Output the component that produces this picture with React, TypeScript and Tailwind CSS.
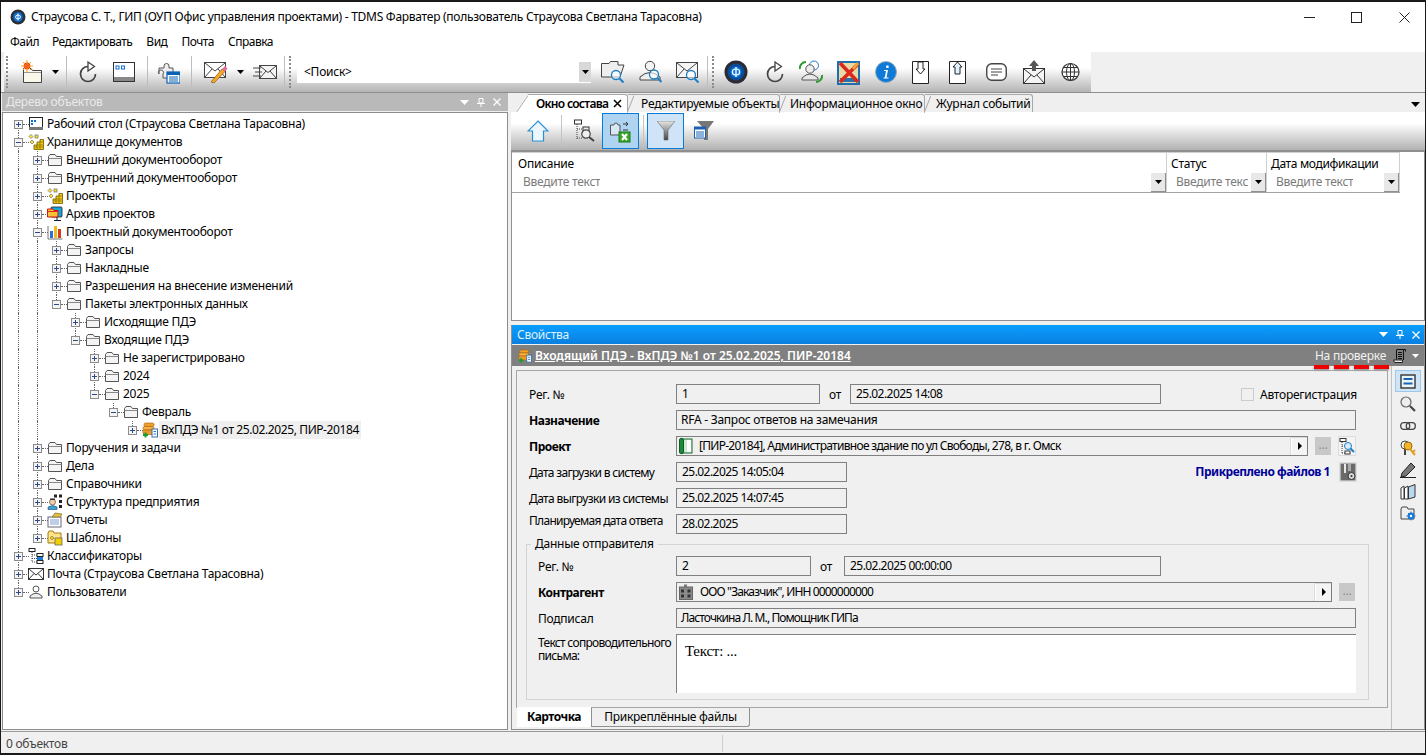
import React from "react";

const S = ({ w, h, vb, children, className }: { w: number; h: number; vb?: string; children: React.ReactNode; className?: string }) => (
  <svg width={w} height={h} viewBox={vb ?? `0 0 ${w} ${h}`} className={"shrink-0 " + (className ?? "")}>{children}</svg>
);

/* ---------- tree icons ---------- */
const Folder = () => (
  <S w={16} h={14}>
    <path d="M1.5 3.5 L3 1.5 H8 L9.5 3.5 H14.5 V12.5 H1.5 Z" fill="#f4f4f4" stroke="#555" />
    <path d="M1.5 5.5 H14.5" stroke="#888" />
  </S>
);
const Desk = () => (
  <S w={16} h={14}>
    <rect x="1.5" y="0.5" width="13" height="11" fill="#fff" stroke="#222" />
    <rect x="1" y="10" width="14" height="3" fill="#777" />
    <rect x="3" y="3" width="2" height="2" fill="#0a6fd6" />
    <rect x="6" y="3" width="2" height="2" fill="#0a6fd6" />
    <rect x="3" y="6" width="2" height="2" fill="#0a6fd6" />
  </S>
);
const Store = () => (
  <S w={16} h={16}>
    <path d="M3 0.5 L5 2.5 L3 4.5 L1 2.5 Z M4 6 L6 8 L4 10 L2 8 Z" fill="#ffe23a" stroke="#555" strokeWidth=".6" />
    <rect x="7" y="1" width="3" height="3" fill="#ffe23a" stroke="#555" strokeWidth=".6" />
    <path d="M6 15.5 V11 H9 V8 H12 V5.5 H15.5 V15.5 Z" fill="#f6c90e" stroke="#6a5a00" strokeWidth=".8" />
    <path d="M9 11 V15 M12 8 V15 M6 13 H15 M9 11 H15 M12 8 H15" stroke="#6a5a00" strokeWidth=".6" />
  </S>
);
const Archive = () => (
  <S w={16} h={16}>
    <rect x="4" y="1" width="11" height="10" rx="1" fill="#1aa4d8" stroke="#123" strokeWidth=".8" />
    <path d="M0.5 3 H6 L7 4.5 H11 V11 H0.5 Z" fill="#f6c237" stroke="#d01010" />
    <path d="M0.5 5.5 H11" stroke="#e02020" />
    <path d="M7 14.5 H14 M10 11 V14" stroke="#123" />
  </S>
);
const Chart = () => (
  <S w={16} h={16}>
    <path d="M1 15 H15.5 M1 15 V2" stroke="#777" fill="none" />
    <rect x="3" y="7" width="3" height="7" fill="#2f6fd0" />
    <rect x="7" y="2" width="3" height="12" fill="#f2b820" />
    <rect x="11" y="5" width="3" height="9" fill="#d43c1c" />
  </S>
);
const Pkg = ({ s = 16 }: { s?: number }) => (
  <S w={s} h={s} vb="0 0 16 16">
    <rect x="2" y="1" width="10" height="3.5" rx="1.5" fill="#f0a028" stroke="#a45c10" strokeWidth=".6" />
    <rect x="1" y="4.5" width="11" height="3.5" rx="1.5" fill="#f6b23c" stroke="#a45c10" strokeWidth=".6" />
    <rect x="1" y="8" width="11" height="4.5" rx="1.5" fill="#ee9a26" stroke="#a45c10" strokeWidth=".6" />
    <rect x="10" y="7" width="5.5" height="8" fill="#fff" stroke="#3b6ea8" />
    <path d="M11.5 9.5 H14 M11.5 12 H14" stroke="#2a7ad0" />
    <path d="M1 13 H6 M3.5 10.5 V15.5" stroke="#1a9a30" strokeWidth="2" />
  </S>
);
const Org = () => (
  <S w={16} h={16}>
    <circle cx="5.5" cy="8" r="3" fill="#f6cfa0" stroke="#555" strokeWidth=".7" />
    <path d="M1 15.5 V13 Q5.5 10 10 13 V15.5 Z" fill="#3aa3d8" stroke="#246" strokeWidth=".6" />
    <path d="M3 6 H8 V4.5 H3 Z" fill="#333" />
    <rect x="7" y="0.5" width="3" height="3" fill="#222" />
    <rect x="12" y="0.5" width="3" height="3" fill="#222" />
    <rect x="12" y="6" width="3" height="3" fill="#222" />
    <rect x="12" y="11" width="3" height="3" fill="#222" />
  </S>
);
const Report = () => (
  <S w={16} h={16}>
    <rect x="1" y="5" width="13" height="10" fill="#fff" stroke="#667" />
    <path d="M3 8 H12 M3 10 H12 M3 12 H12" stroke="#7aa0d0" />
    <path d="M5 5 L8 1 L15 2 L13 5 Z" fill="#e2c048" stroke="#7a6a20" strokeWidth=".7" />
  </S>
);
const Tmpl = () => (
  <S w={16} h={16}>
    <path d="M1 3 L2 1 H6 L7 3 H14 V13 H1 Z" fill="#ffe38a" stroke="#a57b10" />
    <rect x="8" y="8" width="7" height="7" fill="#f2d000" stroke="#666" strokeWidth=".8" />
    <path d="M5 6 L7 8 L5 10 L3 8 Z" fill="#f2d000" stroke="#666" strokeWidth=".6" />
  </S>
);
const Classif = () => (
  <S w={16} h={16}>
    <rect x="1" y="0.5" width="6" height="3" fill="#fff" stroke="#222" />
    <path d="M4 4 V14 M4 7 H9 M4 10.5 H9 M4 14 H9" stroke="#444" strokeDasharray="1 1" />
    <rect x="9" y="5.5" width="6" height="3" fill="#fff" stroke="#222" />
    <rect x="9" y="9" width="6" height="3" fill="#1a7ad6" />
    <rect x="9" y="12.5" width="6" height="3" fill="#fff" stroke="#222" />
  </S>
);
const MailI = () => (
  <S w={16} h={14}>
    <rect x="0.5" y="1.5" width="15" height="11" fill="#fff" stroke="#333" />
    <path d="M1 2 L8 8 L15 2 M1 12 L6 6.5 M15 12 L10 6.5" stroke="#333" fill="none" />
  </S>
);
const User = () => (
  <S w={16} h={14}>
    <circle cx="8" cy="4" r="3" fill="#fff" stroke="#555" />
    <path d="M2 13 V11 Q8 5.5 14 11 V13 Z" fill="#eee" stroke="#555" />
  </S>
);

/* ---------- toolbar icons ---------- */
const Caret = ({ c = "#000" }: { c?: string }) => (
  <S w={7} h={4}><path d="M0 0 H7 L3.5 4 Z" fill={c} /></S>
);
const Handle = () => <div className="h-[32px] w-[2px] shrink-0 border-l-2 border-dotted border-[#8a8a8a]" />;
const Sep = ({ className }: { className: string }) => <div className={"h-[32px] w-px shrink-0 bg-[#bdbdbd] " + className} />;
const NewFolder = () => (
  <S w={22} h={24}>
    <path d="M2.5 8.5 H10 L11.5 10.5 H20.5 V22.5 H2.5 Z" fill="#fbf6ea" stroke="#444" />
    <path d="M3 12.5 H20" stroke="#999" />
    <circle cx="6" cy="6" r="3.4" fill="#ee3a10" />
    <path d="M6 0 V12 M0 6 H12 M2 2 L10 10 M10 2 L2 10" stroke="#f5a623" strokeWidth="1" />
    <circle cx="6" cy="6" r="2" fill="#f25a20" />
  </S>
);
const Refresh = ({ s = 18 }: { s?: number }) => (
  <S w={s} h={s + 4} vb="0 0 18 22">
    <path d="M9 5.5 A7.5 7.5 0 1 0 16.5 13" fill="none" stroke="#444" strokeWidth="1.7" />
    <path d="M9 1 L15.5 5.5 L9 10 Z" fill="#fff" stroke="#444" strokeWidth="1.3" />
  </S>
);
const WinI = () => (
  <S w={22} h={20}>
    <rect x="0.5" y="0.5" width="21" height="19" fill="#fff" stroke="#333" />
    <rect x="1" y="15" width="20" height="4" fill="#888" />
    <rect x="3" y="4" width="3" height="3" fill="none" stroke="#0a6fd6" />
    <rect x="8.5" y="4" width="3" height="3" fill="none" stroke="#0a6fd6" />
  </S>
);
const Puzzle = () => (
  <S w={22} h={24}>
    <path d="M1 8 H6 V6 A2.5 2.5 0 1 1 11 6 V8 H15 V18 H5 V14 A2.5 2.5 0 1 0 1 14 Z" fill="#eee" stroke="#555" />
    <rect x="9" y="12" width="13" height="11" fill="#fff" stroke="#0a62b5" strokeWidth="1.2" />
    <rect x="9" y="12" width="13" height="3" fill="#0a62b5" />
    <path d="M11 17 H20 M11 19 H20 M11 21 H20" stroke="#0a62b5" />
  </S>
);
const MailPen = () => (
  <S w={24} h={24}>
    <rect x="0.5" y="2.5" width="21" height="15" fill="#fff" stroke="#444" />
    <path d="M1 3 L11 11 L21 3 M1 17 L8 9 M21 17 L14 9" stroke="#444" fill="none" />
    <path d="M7 22 L18 9 L21 11.5 L10 23 Z" fill="#f6a92c" stroke="#84560c" strokeWidth=".7" />
    <path d="M18 9 L21 6 L23.5 8.5 L21 11.5 Z" fill="#e46a9a" />
  </S>
);
const MailSend = () => (
  <S w={24} h={18}>
    <rect x="6.5" y="2.5" width="17" height="13" fill="#f4f4f4" stroke="#444" />
    <path d="M7 3 L15 9.5 L23 3 M7 15 L13 8 M23 15 L17 8" stroke="#444" fill="none" />
    <path d="M0 5 H8 M2 9 H9 M0 13 H8" stroke="#444" />
  </S>
);
const Loupe = ({ x = 10, y = 12, r = 5 }: { x?: number; y?: number; r?: number }) => (
  <g>
    <circle cx={x} cy={y} r={r} fill="#ffffff" fillOpacity=".6" stroke="#1c7ec4" strokeWidth="1.3" />
    <path d={`M${x + r - 1} ${y + r - 1} L${x + r + 3} ${y + r + 3}`} stroke="#1c7ec4" strokeWidth="2" />
  </g>
);
const FolderSearch = () => (
  <S w={24} h={24}>
    <path d="M0.5 3.5 H8 L9.5 1.5 H17 V5 H23 L19 17 H0.5 Z" fill="#eee" stroke="#444" />
    <Loupe x={15} y={15} r={4.5} />
  </S>
);
const UserSearch = () => (
  <S w={24} h={24}>
    <circle cx="11" cy="6" r="4.7" fill="#f4f4f4" stroke="#444" />
    <path d="M1 20 V17 Q11 8 21 17 V20 Z" fill="#eee" stroke="#444" />
    <Loupe x={15} y={14.5} r={4.5} />
  </S>
);
const MailSearch = () => (
  <S w={24} h={24}>
    <rect x="0.5" y="2.5" width="21" height="15" fill="#f6f6f6" stroke="#444" />
    <path d="M1 3 L11 11 L21 3 M1 17 L8 9" stroke="#444" fill="none" />
    <Loupe x={15} y={15} r={4.5} />
  </S>
);
const FiLogo = () => (
  <S w={24} h={24}>
    <circle cx="12" cy="12" r="11.5" fill="#2c2c30" />
    <circle cx="12" cy="12" r="8.5" fill="#0a4c9c" />
    <circle cx="12" cy="12" r="5.5" fill="#0e7ce0" />
    <ellipse cx="12" cy="12" rx="3.6" ry="3" fill="none" stroke="#fff" strokeWidth="1.2" />
    <path d="M12 7 V17" stroke="#fff" strokeWidth="1.3" />
  </S>
);
const UsersSync = () => (
  <S w={24} h={24}>
    <circle cx="15" cy="5.5" r="4.5" fill="#fff" stroke="#2b78c4" />
    <circle cx="11" cy="9" r="4.2" fill="#eee" stroke="#555" />
    <path d="M3 20 V18 Q11 10 19 18 V20 Z" fill="#e8e8e8" stroke="#555" />
    <path d="M1 9 A6 6 0 0 1 7 2" stroke="#2d9a2d" strokeWidth="2" fill="none" />
    <path d="M23 15 A6 6 0 0 1 17 22" stroke="#2d9a2d" strokeWidth="2" fill="none" />
  </S>
);
const RedX = () => (
  <S w={23} h={25}>
    <rect x="1" y="2" width="21" height="22" fill="#e9d8a8" stroke="#1e6fb0" strokeWidth="2" />
    <path d="M3 22 H20 V18 H3 Z" fill="#2a6faf" />
    <path d="M3 3 L21 22 M21 4 L3 22" stroke="#dc2a1a" strokeWidth="3.6" />
    <path d="M15 8 L20 2 L22 4 L17 10 Z" fill="#f2a33a" />
  </S>
);
const Info = () => (
  <S w={22} h={22}>
    <circle cx="11" cy="11" r="10.5" fill="#0c7ad6" stroke="#9ab" />
    <path d="M9 9 H13 L11.5 16.5 H13.5 V17.5 H8.5 V16.5 H9.8 L11 10 H9 Z M11.2 4.5 H13.6 V7 H11.2 Z" fill="#fff" />
  </S>
);
const DocArrow = ({ up }: { up?: boolean }) => (
  <S w={17} h={23}>
    <path d="M0.5 0.5 H16.5 V22.5 H0.5 Z" fill="#fff" stroke="#222" />
    {up ? <path d="M8.5 1 L13 6 H11 V13 H6 V6 H4 Z" fill="#dff0ff" stroke="#222" /> : <path d="M6 1 H11 V8 H13 L8.5 13 L4 8 H6 Z" fill="#fff" stroke="#222" />}
  </S>
);
const Chat = () => (
  <S w={21} h={20}>
    <rect x="0.75" y="1.75" width="19.5" height="16.5" rx="5" fill="#fff" stroke="#444" strokeWidth="1.4" />
    <path d="M5 7 H16 M5 10 H16 M5 13 H12" stroke="#444" />
  </S>
);
const MailUp = () => (
  <S w={22} h={24}>
    <rect x="0.5" y="8.5" width="21" height="15" fill="#f5f5f5" stroke="#333" />
    <path d="M1 9 L11 17 L21 9 M1 23 L8 15 M21 23 L14 15" stroke="#333" fill="none" />
    <path d="M11 0 L16 6 H13 V11 H9 V6 H6 Z" fill="#555" />
  </S>
);
const Globe = () => (
  <S w={19} h={20}>
    <circle cx="9.5" cy="10" r="8.5" fill="#fff" stroke="#333" strokeWidth="1.2" />
    <ellipse cx="9.5" cy="10" rx="4" ry="8.5" fill="none" stroke="#333" />
    <path d="M9.5 1.5 V18.5 M1 10 H18 M2.5 5.5 H16.5 M2.5 14.5 H16.5" stroke="#333" />
  </S>
);

/* ---------- panel toolbar icons ---------- */
const Home = () => (
  <S w={22} h={22}>
    <path d="M11 1 L21 11 H16.5 V21 H5.5 V11 H1 Z" fill="#ecf6ff" stroke="#2a8fd0" strokeWidth="1.2" />
  </S>
);
const TreeSearch = () => (
  <S w={21} h={24}>
    <rect x="0.5" y="1" width="7" height="4" fill="#fff" stroke="#333" />
    <path d="M3 5 V20 M3 10 H9 M3 19 H9" stroke="#444" strokeDasharray="1 1" />
    <rect x="9" y="8" width="6" height="4" fill="#eee" stroke="#333" />
    <circle cx="12" cy="15" r="4.2" fill="#eee" stroke="#444" strokeWidth="1.2" />
    <path d="M15 18 L20 22" stroke="#444" strokeWidth="2" />
  </S>
);
const PuzzleXls = () => (
  <S w={21} h={24}>
    <path d="M0.5 6 H4 A2 2 0 1 1 8 6 H10 V16 H0.5 Z" fill="#d8e8f4" stroke="#555" />
    <path d="M13 5 H18 M16 3 L18 5 L16 7 M13 11 H18" stroke="#333" fill="none" />
    <rect x="9" y="13" width="11" height="10" fill="#3ba82c" stroke="#1d7a10" />
    <path d="M12 15 L17 21 M17 15 L12 21" stroke="#fff" strokeWidth="2" />
  </S>
);
const Funnel = () => (
  <S w={18} h={20}>
    <defs>
      <linearGradient id="fg" x1="0" x2="0" y1="0" y2="1"><stop offset="0" stopColor="#e8e8e8" /><stop offset="1" stopColor="#444" /></linearGradient>
    </defs>
    <path d="M0 0 H18 L11 9 V19 H7 V9 Z" fill="url(#fg)" stroke="#666" strokeWidth=".6" />
  </S>
);
const FunnelList = () => (
  <S w={20} h={20}>
    <path d="M3 0 H20 L14 8 V19 H10 V8 Z" fill="#777" />
    <rect x="0.5" y="6" width="11" height="11" fill="#fff" stroke="#1a62b0" />
    <rect x="0.5" y="6" width="11" height="2.5" fill="#1a62b0" />
    <path d="M2 11 H10 M2 13 H10 M2 15 H10" stroke="#1a62b0" />
  </S>
);

/* ---------- side icons ---------- */
const CardI = () => (
  <S w={16} h={15}>
    <rect x="1" y="1" width="14" height="13" fill="#eaf4fb" stroke="#333" strokeWidth="1.4" />
    <path d="M3.5 5 H12.5 M3.5 9.5 H12.5" stroke="#1a62b0" strokeWidth="2" />
  </S>
);
const GLoupe = () => (
  <S w={16} h={16}>
    <circle cx="6" cy="6" r="5" fill="#eee" stroke="#666" strokeWidth="1.2" />
    <path d="M10 10 L15 15" stroke="#444" strokeWidth="2.2" />
  </S>
);
const Chain = () => (
  <S w={16} h={10}>
    <rect x="0.7" y="1.7" width="9" height="6.6" rx="3" fill="none" stroke="#444" strokeWidth="1.3" />
    <rect x="6.3" y="1.7" width="9" height="6.6" rx="3" fill="none" stroke="#444" strokeWidth="1.3" />
  </S>
);
const Keys = () => (
  <S w={16} h={16}>
    <circle cx="5" cy="5" r="4" fill="#fff" stroke="#444" />
    <path d="M5 9 V15" stroke="#444" strokeWidth="2" />
    <circle cx="8" cy="6" r="4" fill="#f2b526" stroke="#9a6a10" />
    <path d="M10 9 L15 15 M13 12 L15 10" stroke="#e2a11c" strokeWidth="2" />
  </S>
);
const Pen = () => (
  <S w={16} h={16}>
    <path d="M2 11 L11 1 L15 5 L6 14 L1 15 Z" fill="#777" stroke="#222" />
    <path d="M0 15.5 H16" stroke="#222" />
  </S>
);
const Books = () => (
  <S w={16} h={16}>
    <path d="M1 4 L4 2 V15 H1 Z M4.5 4 L8 2 V15 H4.5 Z" fill="#fff" stroke="#333" />
    <path d="M8.5 3 L15 0.5 V13 L8.5 15 Z" fill="#b9d9f2" stroke="#333" />
  </S>
);
const FolderGear = () => (
  <S w={16} h={16}>
    <path d="M1 3 L2 1 H7 L8 3 H14 V13 H1 Z" fill="#eee" stroke="#444" />
    <circle cx="11" cy="10" r="3.4" fill="#1a7ad6" />
    <path d="M11 5.5 V14.5 M6.5 10 H15.5 M8 7 L14 13 M14 7 L8 13" stroke="#1a7ad6" />
    <circle cx="11" cy="10" r="1.2" fill="#fff" />
  </S>
);
const Scroll = () => (
  <S w={13} h={14}>
    <path d="M3.5 0.5 H12.5 M12.5 0.5 V2.5 M10.5 1 V11 M3.5 1 V10.5" stroke="#111" fill="none" />
    <path d="M5 3.5 H9 M5 5.5 H9 M5 7.5 H9 M5 9.5 H9" stroke="#111" />
    <path d="M0.5 11 H9.5 V13.5 H1.5 Z" fill="#e8e8e8" stroke="#222" />
  </S>
);
const ProjBook = () => (
  <S w={14} h={16}>
    <rect x="2" y="1" width="11" height="14" fill="#cfe8d4" stroke="#166a2c" />
    <rect x="0.5" y="0.5" width="4" height="15" rx="1.5" fill="#1d8a3b" stroke="#0f5c24" />
    <rect x="8" y="2" width="4" height="12" fill="#fff" />
  </S>
);
const Building = () => (
  <S w={14} h={16}>
    <rect x="0.5" y="3" width="13" height="12.5" fill="#8a8a8a" stroke="#666" />
    <rect x="5" y="0.5" width="3" height="3" fill="#777" />
    <rect x="2" y="5.5" width="3" height="3" fill="#333" />
    <rect x="2" y="10.5" width="3" height="3" fill="#333" />
    <rect x="8.5" y="5.5" width="3" height="3" fill="#333" />
    <rect x="8.5" y="10.5" width="3" height="3" fill="#333" />
  </S>
);
const TreeBtn = () => (
  <S w={16} h={17}>
    <rect x="1" y="0.5" width="6" height="3" fill="#fff" stroke="#333" />
    <path d="M3 4 V16 M3 8 H7 M3 15 H7" stroke="#444" strokeDasharray="1 1" />
    <circle cx="9" cy="8" r="3.5" fill="#d8ecfa" stroke="#1c7ec4" />
    <path d="M11.5 10.5 L15 14" stroke="#1c7ec4" strokeWidth="2" />
    <rect x="6" y="13" width="5" height="3" fill="#fff" stroke="#333" />
  </S>
);
const ClipDisk = () => (
  <S w={16} h={18}>
    <rect x="0.5" y="0.5" width="15" height="17" fill="#6a6a6a" />
    <rect x="4" y="1" width="2" height="9" fill="#e8e8e8" />
    <rect x="8" y="1" width="3" height="7" fill="#aaa" />
    <circle cx="11.5" cy="13" r="3.5" fill="#d8d8d8" stroke="#333" />
    <circle cx="11.5" cy="13" r="1" fill="#333" />
  </S>
);

/* ---------- tree ---------- */
type K = "folder" | "desk" | "store" | "arch" | "chart" | "pkg" | "org" | "rep" | "tmpl" | "cls" | "mail" | "user";
const iconOf: Record<K, React.ReactNode> = {
  folder: <Folder />, desk: <Desk />, store: <Store />, arch: <Archive />, chart: <Chart />, pkg: <Pkg />,
  org: <Org />, rep: <Report />, tmpl: <Tmpl />, cls: <Classif />, mail: <MailI />, user: <User />,
};
const rows: [number, string, K, boolean][] = [
  [0, "Рабочий стол (Страусова Светлана Тарасовна)", "desk", false],
  [0, "Хранилище документов", "store", true],
  [1, "Внешний документооборот", "folder", false],
  [1, "Внутренний документооборот", "folder", false],
  [1, "Проекты", "store", false],
  [1, "Архив проектов", "arch", false],
  [1, "Проектный документооборот", "chart", true],
  [2, "Запросы", "folder", false],
  [2, "Накладные", "folder", false],
  [2, "Разрешения на внесение изменений", "folder", false],
  [2, "Пакеты электронных данных", "folder", true],
  [3, "Исходящие ПДЭ", "folder", false],
  [3, "Входящие ПДЭ", "folder", true],
  [4, "Не зарегистрировано", "folder", false],
  [4, "2024", "folder", false],
  [4, "2025", "folder", true],
  [5, "Февраль", "folder", true],
  [6, "ВхПДЭ №1 от 25.02.2025, ПИР-20184", "pkg", false],
  [1, "Поручения и задачи", "folder", false],
  [1, "Дела", "folder", false],
  [1, "Справочники", "folder", false],
  [1, "Структура предприятия", "org", false],
  [1, "Отчеты", "rep", false],
  [1, "Шаблоны", "tmpl", false],
  [0, "Классификаторы", "cls", false],
  [0, "Почта (Страусова Светлана Тарасовна)", "mail", false],
  [0, "Пользователи", "user", false],
];
const hasNext = (i: number, k: number) => {
  for (let j = i + 1; j < rows.length; j++) {
    if (rows[j][0] < k) return false;
    if (rows[j][0] === k) return true;
  }
  return false;
};
const VDot = ({ b }: { b: string }) => <span className={"absolute left-[9px] border-l border-dotted border-[#666] " + b} />;
const Tree = () => (
  <div className="pl-[6px] pt-[2px]">
    {rows.map(([lvl, label, k, open], i) => (
      <div key={i} className="flex h-[18px] items-stretch">
        {Array.from({ length: lvl }).map((_, g) => (
          <div key={g} className="relative w-[19px] shrink-0">{hasNext(i, g) && <VDot b="top-0 bottom-0" />}</div>
        ))}
        <div className="relative flex w-[19px] shrink-0 items-center">
          {i > 0 && <VDot b={"top-0 h-[9px]"} />}
          {hasNext(i, lvl) && <VDot b={"top-[9px] bottom-0"} />}
          <span className="absolute left-[14px] top-[9px] w-[6px] border-t border-dotted border-[#666]" />
          <span className="absolute left-[5px] top-[5px] flex h-[9px] w-[9px] items-center justify-center border border-[#8c8c8c] bg-[#f4f4f4]">
            <span className="absolute h-px w-[5px] bg-[#2c4a8c]" />
            {!open && <span className="absolute h-[5px] w-px bg-[#2c4a8c]" />}
          </span>
        </div>
        <div className="flex w-[16px] shrink-0 items-center justify-center">{iconOf[k]}</div>
        <span className={"ml-[1px] px-[2px] leading-[18px] whitespace-nowrap " + (k === "pkg" ? "bg-[#efefef] tracking-[-0.4px]" : "")}>{label}</span>
      </div>
    ))}
  </div>
);

/* ---------- form ---------- */
const Field = ({ w, children, className }: { w: string; children?: React.ReactNode; className?: string }) => (
  <div className={"flex h-[20px] shrink-0 items-center border border-[#808080] bg-[#f0f0f0] pl-[2px] whitespace-nowrap " + w + " " + (className ?? "")}>
    {children}
  </div>
);
const Arrow = () => (
  <div className="ml-auto flex h-[17px] w-[16px] items-center justify-center border-l border-white bg-[#f4f4f4] shadow-[0_0_1px_#777]">
    <span className="h-0 w-0 border-y-[4px] border-l-[4px] border-y-transparent border-l-black" />
  </div>
);
const DotsBtn = ({ className }: { className: string }) => (
  <div className={"flex h-[18px] w-[16px] items-center justify-center bg-[#c8c8c8] pb-[2px] text-[#9a8a9a] " + className}>...</div>
);
const IconBtn = ({ children, className }: { children: React.ReactNode; className: string }) => (
  <div className={"flex h-[20px] w-[18px] items-center justify-center border border-[#dcdcdc] bg-[#f4f4f4] " + className}>{children}</div>
);

const ColFilter = ({ ph, pad }: { ph: string; pad: string }) => (
  <div className={"flex h-[20px] w-full shrink-0 items-center text-[#7b7b7b] " + pad}>
    <span className="overflow-hidden whitespace-nowrap">{ph}</span>
    <span className="ml-auto flex h-[19px] w-[15px] shrink-0 items-center justify-center border-b border-r border-[#909090] bg-[#e8e8e8]"><Caret /></span>
  </div>
);

const Tab = ({ w, label, active }: { w: string; label: string; active?: boolean }) => (
  <div className={"relative flex h-[18px] shrink-0 items-center rounded-tr-[3px] border-r border-t border-[#a8a8a8] whitespace-nowrap " + w + (active ? " z-10 bg-white font-semibold tracking-[-0.7px] [clip-path:polygon(12px_0,100%_0,100%_100%,0_100%)]" : " bg-[#f0f0f0]")}>
    {active
      ? <S w={12} h={18} className="absolute left-0 top-0"><path d="M0 18 L12 0.5" stroke="#a8a8a8" fill="none" /></S>
      : <S w={7} h={18} className="absolute -left-px top-0"><path d="M0 18 L7 0.5" stroke="#a8a8a8" fill="none" /></S>}
    {label}
    {active && (
      <S w={9} h={9} className="ml-auto mr-[5px]"><path d="M1 1 L8 8 M8 1 L1 8" stroke="#000" strokeWidth="1.5" /></S>
    )}
  </div>
);

const Row = ({ children }: { children: React.ReactNode }) => <div className="flex items-center">{children}</div>;
const Pane = ({ className }: { className: string }) => (
  <div className={"flex items-center gap-[8px] " + className}>
    <S w={9} h={5}><path d="M0 0 H9 L4.5 5 Z" fill="#fff" /></S>
    <S w={8} h={9}><path d="M2 .5 H6 V5 H2 Z M0 5.5 H8 M4 6 V9" stroke="#fff" fill="none" /></S>
    <S w={8} h={8}><path d="M.5 .5 L7.5 7.5 M7.5 .5 L.5 7.5" stroke="#fff" strokeWidth="1.3" /></S>
  </div>
);

export default function App() {
  return (
    <div className="h-[755px] w-[1428px] overflow-hidden bg-white text-[12px] leading-none tracking-[-0.25px] text-black [font-family:'Noto_Sans','Liberation_Sans',sans-serif]">
      <div className="flex h-[755px] w-[1426px] flex-col border-x border-b-2 border-t-2 border-[#1a1a1a] bg-[#f0f0f0]">
        {/* title */}
        <div className="flex h-[30px] shrink-0 items-center bg-white pl-[9px]">
          <S w={16} h={16}><circle cx="8" cy="8" r="7.5" fill="#2c3138" /><circle cx="8" cy="8" r="4.8" fill="#0c6fd0" /><ellipse cx="8" cy="8" rx="2.4" ry="2" fill="none" stroke="#fff" /><path d="M8 4.5 V11.5" stroke="#fff" /></S>
          <span className="ml-[5px] whitespace-nowrap tracking-[-0.27px]">Страусова С. Т., ГИП (ОУП Офис управления проектами) - TDMS Фарватер (пользователь Страусова Светлана Тарасовна)</span>
          <div className="ml-auto flex h-full">
            <div className="flex w-[47px] items-center justify-center pl-[4px]"><S w={11} h={1}><path d="M0 .5 H11" stroke="#222" /></S></div>
            <div className="flex w-[47px] items-center justify-center pl-[4px]"><S w={11} h={11}><rect x=".5" y=".5" width="10" height="10" fill="none" stroke="#222" /></S></div>
            <div className="flex w-[47px] items-center justify-center pl-[5px]"><S w={11} h={11}><path d="M.5 .5 L10.5 10.5 M10.5 .5 L.5 10.5" stroke="#222" /></S></div>
          </div>
        </div>
        {/* menu */}
        <div className="flex h-[20px] shrink-0 items-center bg-white pl-[9px] tracking-[-0.5px]">
          <span>Файл</span><span className="ml-[13px]">Редактировать</span><span className="ml-[14px]">Вид</span><span className="ml-[14px]">Почта</span><span className="ml-[14px]">Справка</span>
        </div>
        {/* toolbar */}
        <div className="flex h-[41px] shrink-0 border-b border-[#8e8e8e] bg-[#f0f0f0]">
          <div className="ml-[3px] flex h-full w-[1087px] items-center rounded-t-[2px] bg-gradient-to-b from-white from-40% to-[#b4b4b4]">
            <div className="ml-[2px]"><Handle /></div>
            <div className="ml-[13px]"><NewFolder /></div>
            <div className="ml-[9px]"><Caret /></div>
            <Sep className="ml-[7px]" />
            <div className="ml-[12px]"><Refresh /></div>
            <div className="ml-[16px]"><WinI /></div>
            <Sep className="ml-[12px]" />
            <div className="ml-[10px]"><Puzzle /></div>
            <Sep className="ml-[11px]" />
            <div className="ml-[12px]"><MailPen /></div>
            <div className="ml-[9px]"><Caret /></div>
            <div className="ml-[9px]"><MailSend /></div>
            <Sep className="ml-[7px]" />
            <div className="ml-[4px]"><Handle /></div>
            <div className="ml-[6px] flex h-[21px] w-[294px] shrink-0 items-center bg-white pl-[7px]">
              &lt;Поиск&gt;
              <span className="ml-auto flex h-[20px] w-[12px] items-center justify-center bg-[#d8d8d8]"><Caret /></span>
            </div>
            <div className="ml-[10px]"><FolderSearch /></div>
            <div className="ml-[14px]"><UserSearch /></div>
            <div className="ml-[13px]"><MailSearch /></div>
            <Sep className="ml-[7px]" />
            <div className="ml-[4px]"><Handle /></div>
            <div className="ml-[10px]"><FiLogo /></div>
            <div className="ml-[18px]"><Refresh /></div>
            <div className="ml-[15px]"><UsersSync /></div>
            <div className="ml-[14px]"><RedX /></div>
            <div className="ml-[15px]"><Info /></div>
            <div className="ml-[15px]"><DocArrow /></div>
            <div className="ml-[20px]"><DocArrow up /></div>
            <div className="ml-[20px]"><Chat /></div>
            <div className="ml-[16px]"><MailUp /></div>
            <div className="ml-[16px]"><Globe /></div>
          </div>
        </div>
        {/* main */}
        <div className="flex min-h-0 flex-1">
          {/* left */}
          <div className="ml-px flex w-[506px] shrink-0 flex-col">
            <div className="flex h-[18px] shrink-0 items-center bg-[#b9b9b9] pl-[4px] text-[#e9e9e9]">
              Дерево объектов
              <Pane className="ml-auto mr-[7px]" />
            </div>
            <div className="mt-[1px] min-h-0 flex-1 border border-[#8c8c8c] bg-white"><Tree /></div>
          </div>
          {/* right */}
          <div className="ml-[3px] flex min-w-0 flex-1 flex-col">
            <div className="flex h-[19px] shrink-0 items-end bg-[#efefef] pl-[5px]">
              <Tab w="w-[112px] pl-[20px]" label="Окно состава" active />
              <Tab w="w-[152px] pl-[13px]" label="Редактируемые объекты" />
              <Tab w="w-[145px] pl-[10px]" label="Информационное окно" />
              <Tab w="w-[108px] pl-[11px]" label="Журнал событий" />
              <div className="mb-[5px] ml-auto mr-[5px]"><S w={9} h={5}><path d="M0 0 H9 L4.5 5 Z" fill="#000" /></S></div>
            </div>
            <div className="flex h-[38px] shrink-0 items-center bg-gradient-to-b from-white from-30% to-[#b2b2b2] pl-[16px]">
              <Home />
              <div className="ml-[12px] h-[32px] w-px bg-[#c4c4c4]" />
              <div className="ml-[12px]"><TreeSearch /></div>
              <div className="ml-[7px] flex h-[36px] w-[37px] items-center justify-center border border-[#0a7ad8] bg-[#aed4f2]"><PuzzleXls /></div>
              <div className="ml-[4px] h-[32px] w-px bg-[#c4c4c4]" />
              <div className="ml-[3px] flex h-[36px] w-[37px] items-center justify-center border border-[#0a7ad8] bg-[#cfe4f6]"><Funnel /></div>
              <div className="ml-[10px]"><FunnelList /></div>
            </div>
            {/* table area */}
            <div className="h-[171px] shrink-0 border border-t-[2px] border-[#8f8f8f] bg-white">
              <div className="flex h-[41px] w-[888px] border-b border-t border-[#a4a4a4] border-t-[#cfcfcf]">
                <div className="flex w-[655px] shrink-0 flex-col border-r border-[#cfcfcf]">
                  <div className="h-[20px] pl-[6px] pt-[5px]">Описание</div>
                  <ColFilter ph="Введите текст" pad="pl-[11px]" />
                </div>
                <div className="flex w-[100px] shrink-0 flex-col border-r border-[#cfcfcf]">
                  <div className="h-[20px] pl-[4px] pt-[5px]">Статус</div>
                  <ColFilter ph="Введите текс" pad="pl-[9px]" />
                </div>
                <div className="flex w-[133px] shrink-0 flex-col border-r border-[#cfcfcf]">
                  <div className="h-[20px] pl-[4px] pt-[5px] tracking-[-0.35px]">Дата модификации</div>
                  <ColFilter ph="Введите текст" pad="pl-[9px]" />
                </div>
              </div>
            </div>
            {/* props */}
            <div className="mt-[4px] flex min-h-0 flex-1 flex-col border border-t-0 border-[#8f8f8f] bg-[#f0f0f0]">
              <div className="flex h-[19px] shrink-0 items-center bg-gradient-to-b from-[#0a9fff] to-[#0a7fe0] pl-[5px] text-[#dff1ff]">
                Свойства
                <Pane className="ml-auto mr-[4px]" />
              </div>
              <div className="relative mt-px flex h-[21px] shrink-0 items-center bg-[#808080] pl-[6px] text-white">
                <Pkg s={14} />
                <span className="ml-[3px] whitespace-nowrap font-semibold tracking-normal underline">Входящий ПДЭ - ВхПДЭ №1 от 25.02.2025, ПИР-20184</span>
                <span className="ml-auto whitespace-nowrap text-[#f2f2f2]">На проверке</span>
                <span className="ml-[7px]"><Scroll /></span>
                <span className="ml-[6px] mr-[5px]"><Caret c="#fff" /></span>
                <div className="absolute right-[35px] top-[20px] z-10 flex gap-[5px]">
                  <span className="h-[4px] w-[15px] bg-[#ee0000] shadow-[0_1px_2px_#888]" />
                  <span className="h-[4px] w-[15px] bg-[#ee0000] shadow-[0_1px_2px_#888]" />
                  <span className="h-[4px] w-[15px] bg-[#ee0000] shadow-[0_1px_2px_#888]" />
                  <span className="h-[4px] w-[15px] bg-[#ee0000] shadow-[0_1px_2px_#888]" />
                </div>
              </div>
              <div className="flex min-h-0 flex-1">
                {/* form col */}
                <div className="flex w-[876px] shrink-0 flex-col pl-[4px] pt-[4px]">
                  <div className="h-[337px] shrink-0 border border-b-0 border-[#a6a6a6] pl-[12px] pt-[13px]">
                    <div className="flex flex-col gap-[6px]">
                      <Row>
                        <span className="w-[147px] shrink-0 pt-[2px]">Рег. №</span>
                        <Field w="w-[144px]" className="pl-[5px]">1</Field>
                        <span className="ml-[9px] w-[21px] pt-[2px]">от</span>
                        <Field w="w-[311px]" className="pl-[5px] tracking-[-0.55px]">25.02.2025 14:08</Field>
                        <span className="ml-[80px] h-[13px] w-[13px] shrink-0 border border-[#c8ccd0]" />
                        <span className="ml-[6px] whitespace-nowrap pt-[2px]">Авторегистрация</span>
                      </Row>
                      <Row>
                        <span className="w-[147px] shrink-0 pt-[2px] font-bold tracking-[-0.5px]">Назначение</span>
                        <Field w="w-[680px]" className="pl-[4px]">RFA - Запрос ответов на замечания</Field>
                      </Row>
                      <Row>
                        <span className="w-[147px] shrink-0 pt-[2px] font-bold tracking-[-0.5px]">Проект</span>
                        <Field w="w-[632px]"><ProjBook /><span className="ml-[6px] tracking-[-0.7px]">[ПИР-20184], Административное здание по ул Свободы, 278, в г. Омск</span><Arrow /></Field>
                        <DotsBtn className="ml-[7px]" />
                        <IconBtn className="ml-[7px]"><TreeBtn /></IconBtn>
                      </Row>
                      <Row>
                        <span className="w-[147px] shrink-0 whitespace-nowrap pt-[2px] tracking-[-0.68px]">Дата загрузки в систему</span>
                        <Field w="w-[171px]" className="pl-[5px] tracking-[-0.55px]">25.02.2025 14:05:04</Field>
                        <span className="ml-auto whitespace-nowrap font-bold tracking-[-0.5px] text-[#000099]">Прикреплено файлов 1</span>
                        <IconBtn className="ml-[9px] mr-[30px]"><ClipDisk /></IconBtn>
                      </Row>
                      <Row>
                        <span className="w-[147px] shrink-0 whitespace-nowrap pt-[2px] tracking-[-0.62px]">Дата выгрузки из системы</span>
                        <Field w="w-[171px]" className="pl-[5px] tracking-[-0.55px]">25.02.2025 14:07:45</Field>
                      </Row>
                      <Row>
                        <span className="-mt-[6px] w-[147px] shrink-0 whitespace-nowrap tracking-[-0.7px]">Планируемая дата ответа</span>
                        <Field w="w-[171px]" className="pl-[5px] tracking-[-0.55px]">28.02.2025</Field>
                      </Row>
                    </div>
                    <fieldset className="ml-[-3px] mt-[2px] h-[164px] w-[843px] border border-[#d4d4d4] pl-[11px]">
                      <legend className="ml-[-7px] h-[16px] px-[4px] leading-[16px]">Данные отправителя</legend>
                      <div className="mt-[4px] flex flex-col gap-[6px]">
                        <Row>
                          <span className="w-[138px] shrink-0 pt-[2px]">Рег. №</span>
                          <Field w="w-[135px]" className="pl-[5px]">2</Field>
                          <span className="ml-[9px] w-[24px] pt-[2px]">от</span>
                          <Field w="w-[317px]" className="pl-[5px] tracking-[-0.55px]">25.02.2025 00:00:00</Field>
                        </Row>
                        <Row>
                          <span className="w-[138px] shrink-0 pt-[2px] font-bold tracking-[-0.5px]">Контрагент</span>
                          <Field w="w-[656px]"><Building /><span className="ml-[7px] tracking-[-0.85px]">ООО "Заказчик", ИНН 0000000000</span><Arrow /></Field>
                          <DotsBtn className="ml-[7px]" />
                        </Row>
                        <Row>
                          <span className="w-[138px] shrink-0 pt-[2px]">Подписал</span>
                          <Field w="w-[680px]" className="pl-[4px] tracking-[-0.9px]">Ласточкина Л. М., Помощник ГИПа</Field>
                        </Row>
                        <div className="flex">
                          <span className="w-[138px] shrink-0 whitespace-nowrap pt-[2px] leading-[13px] tracking-[-0.7px]">Текст сопроводительного<br />письма:</span>
                          <div className="h-[59px] w-[680px] border-l border-t border-[#7f7f7f] bg-white pl-[8px] pt-[9px] text-[15px] [font-family:'Liberation_Serif',serif]">Текст: ...</div>
                        </div>
                      </div>
                    </fieldset>
                  </div>
                  <div className="flex h-[20px] shrink-0 border-t border-[#a6a6a6] pl-[1px]">
                    <div className="-mt-px flex h-[20px] w-[74px] items-center justify-center bg-white font-bold tracking-[-0.5px]">Карточка</div>
                    <div className="flex h-[19px] w-[159px] items-center justify-center rounded-br-[3px] border border-t-0 border-[#8f8f8f]">Прикреплённые файлы</div>
                  </div>
                </div>
                {/* side */}
                <div className="ml-[3px] flex w-[33px] flex-col items-center border-l border-[#c0c0c0] pt-[4px]">
                  <div className="flex h-[22px] w-[26px] items-center justify-center border border-[#9cc8ec] bg-[#cfe4f6]"><CardI /></div>
                  <div className="mt-[1px] flex h-[22px] items-center"><GLoupe /></div>
                  <div className="flex h-[22px] items-center"><Chain /></div>
                  <div className="flex h-[22px] items-center"><Keys /></div>
                  <div className="flex h-[22px] items-center"><Pen /></div>
                  <div className="flex h-[22px] items-center"><Books /></div>
                  <div className="flex h-[22px] items-center"><FolderGear /></div>
                </div>
              </div>
            </div>
          </div>
        </div>
        {/* status */}
        <div className="mt-px flex h-[22px] shrink-0 items-center border-t border-[#9a9a9a] pl-[5px] pt-[2px] text-[#444]">
          <span className="w-[716px]">0 объектов</span>
          <span className="h-[17px] w-px bg-[#cfcfcf]" />
        </div>
      </div>
    </div>
  );
}
